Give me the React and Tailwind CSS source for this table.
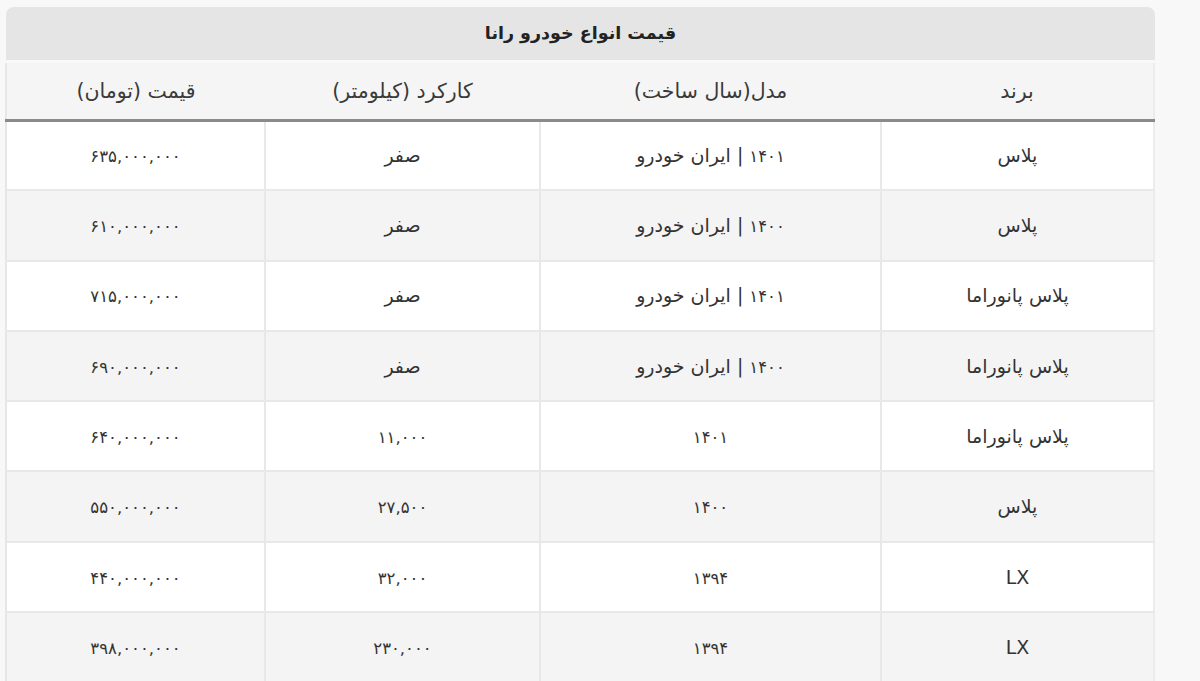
const rows = [
  ['پلاس', '۱۴۰۱ | ایران خودرو', 'صفر', '۶۳۵,۰۰۰,۰۰۰'],
  ['پلاس', '۱۴۰۰ | ایران خودرو', 'صفر', '۶۱۰,۰۰۰,۰۰۰'],
  ['پلاس پانوراما', '۱۴۰۱ | ایران خودرو', 'صفر', '۷۱۵,۰۰۰,۰۰۰'],
  ['پلاس پانوراما', '۱۴۰۰ | ایران خودرو', 'صفر', '۶۹۰,۰۰۰,۰۰۰'],
  ['پلاس پانوراما', '۱۴۰۱', '۱۱,۰۰۰', '۶۴۰,۰۰۰,۰۰۰'],
  ['پلاس', '۱۴۰۰', '۲۷,۵۰۰', '۵۵۰,۰۰۰,۰۰۰'],
  ['LX', '۱۳۹۴', '۳۲,۰۰۰', '۴۴۰,۰۰۰,۰۰۰'],
  ['LX', '۱۳۹۴', '۲۳۰,۰۰۰', '۳۹۸,۰۰۰,۰۰۰'],
];

const headers = ['برند', 'مدل(سال ساخت)', 'کارکرد (کیلومتر)', 'قیمت (تومان)'];

// persian digits come out wider than the letters in DejaVu, so shrink them
const renderCell = (text) =>
  text.split(/([۰-۹,]+)/).map((part, k) =>
    /^[۰-۹,]+$/.test(part) ? (
      <span key={k} className="text-[16.5px]">
        {part}
      </span>
    ) : (
      part
    )
  );

export default function App() {
  return (
    <div
      dir="rtl"
      className="w-full h-[681px] overflow-hidden bg-[#f8f8f8] text-[#333]"
      style={{ fontFamily: '"DejaVu Sans", "Noto Sans", sans-serif' }}
    >
      <div className="w-[1149px] mr-[45px] pt-[7px]">
        <div className="h-[53px] rounded-t-lg bg-[#e5e5e5] flex items-center justify-center text-[17.5px] font-bold text-[#222]">
          قیمت انواع خودرو رانا
        </div>
        <table className="w-full table-fixed border-collapse mt-[3px] border-l-2 border-l-[#e6e6e6] border-r-2 border-r-[#ececec]">
          <colgroup>
            <col className="w-[273px]" />
            <col className="w-[341px]" />
            <col className="w-[275px]" />
            <col className="w-[259px]" />
          </colgroup>
          <thead>
            <tr className="bg-[#f5f5f5] h-[57px] border-b-[3px] border-b-[#8a8a8a]">
              {headers.map((h) => (
                <th key={h} className="font-normal text-[20.5px] text-center pt-[2px] text-[#3a3a3a]">
                  {h}
                </th>
              ))}
            </tr>
          </thead>
          <tbody>
            {rows.map((r, i) => (
              <tr
                key={i}
                className={`h-[70.3px] border-b-2 border-b-[#e8e8e8] ${i % 2 ? 'bg-[#f4f4f4]' : 'bg-white'}`}
              >
                {r.map((c, j) => (
                  <td
                    key={j}
                    className={`text-center text-[19px] ${j < 3 ? 'border-l-2 border-l-[#e8e8e8]' : ''}`}
                  >
                    {renderCell(c)}
                  </td>
                ))}
              </tr>
            ))}
          </tbody>
        </table>
      </div>
    </div>
  );
}
